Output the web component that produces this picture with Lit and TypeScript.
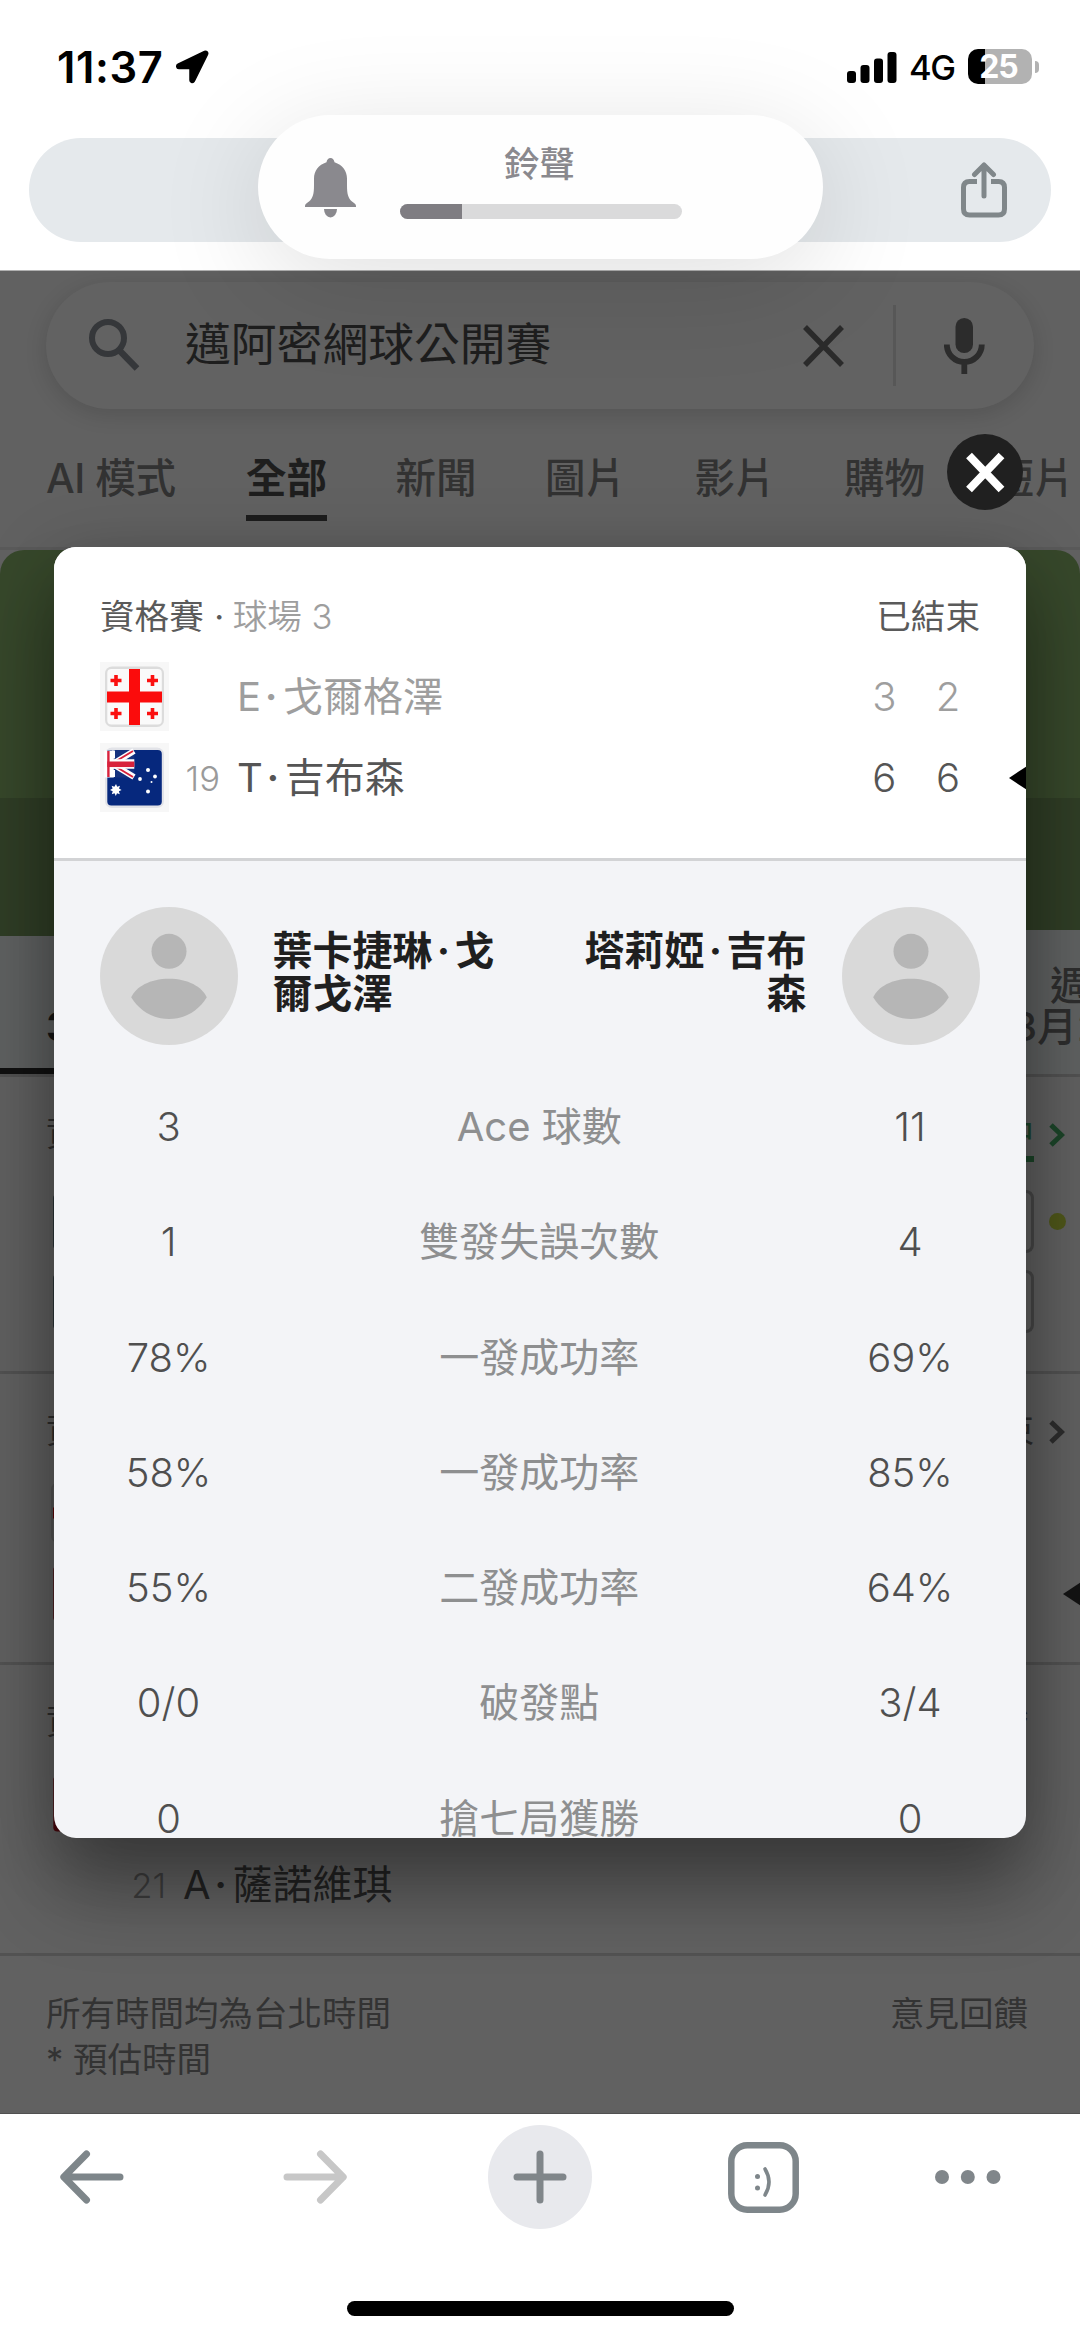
import { LitElement, html, svg, css, nothing } from "lit";
import { customElement, property } from "lit/decorators.js";
import { classMap } from "lit/directives/class-map.js";

type Player = { flag: string; seed?: string; initial?: string; name?: string; scores?: string[]; winner?: boolean };

const miniCross = (x: number, y: number) =>
  svg`<path d="M${x - 5.5} ${y}h11M${x} ${y - 5.5}v11" stroke="#fb1010" stroke-width="3.6"/>`;

const flags: Record<string, unknown> = {
  georgia: svg`
    <rect x="5" y="4.500" width="59" height="60.500" rx="7" fill="#dcdcdc"/>
    <rect x="7.300" y="7" width="54.500" height="55.500" rx="4" fill="#fafafa"/>
    <path d="M7 35h55M34.500 7v56" stroke="#fb0c0c" stroke-width="11"/>
    ${miniCross(16, 18.5)}${miniCross(52.5, 18.5)}${miniCross(16, 51.5)}${miniCross(52.5, 51.5)}`,
  australia: svg`
    <rect x="5" y="4.500" width="59" height="60.500" rx="7" fill="#e2e3e8"/>
    <rect x="7.300" y="7" width="54.500" height="55.500" rx="4" fill="#06287d"/>
    <rect x="7.300" y="7" width="27" height="27.500" fill="#15327f"/>
    <path d="M11 22L34 8M11 20L34 34" stroke="#fff" stroke-width="6"/>
    <path d="M13 20L33 8M13 22L33 34" stroke="#d8223c" stroke-width="2"/>
    <path d="M7.300 21h27M9 7.500v27" stroke="#fff" stroke-width="9.500"/>
    <path d="M7.300 21.300h27" stroke="#d8223c" stroke-width="5.500"/>
    <path d="M8.400 8v26" stroke="#d8223c" stroke-width="2.400"/>
    <path d="M12 7.500h3v8h-3zM12 27h3v7h-3z" fill="#fff"/>
    <path d="M16 41l1.200 2.700 2.800-.9-1 2.800 2.600 1.400-2.700 1.300.9 2.900-2.800-1-1.200 2.700-1.200-2.700-2.800 1 .9-2.900-2.700-1.300 2.600-1.400-1-2.800 2.800.9z" fill="#fff"/>
    <g fill="#fff"><circle cx="48" cy="27" r="2"/><circle cx="40" cy="36" r="1.900"/><circle cx="55" cy="33.500" r="1.900"/><circle cx="48" cy="48.500" r="2"/><circle cx="51.500" cy="39" r="1"/></g>`,
  red: svg`<rect x="7.300" y="7" width="54.500" height="55.500" rx="4" fill="#c01020"/>`,
  navy: svg`<rect x="7.300" y="7" width="54.500" height="55.500" rx="4" fill="#3a5a66"/>`,
};

@customElement("tennis-match")
export class TennisMatch extends LitElement {
  @property({ type: Boolean, reflect: true }) dim = false;
  @property({ type: Boolean, reflect: true }) live = false;
  @property() court = "";
  @property() status = "";
  @property({ type: Boolean }) chevron = false;
  @property({ attribute: false }) players: Player[] = [];

  static styles = css`
    :host { display: block; padding: 49px 46px 40px; color: #555; font-size: 40px; box-sizing: border-box; }
    :host([dim]) { padding: 36px 46px 28px; height: 291px; border-top: 3px solid #525252; color: #222; }
    :host([live]) { height: 297px; }
    .head { display: flex; justify-content: space-between; height: 40px; line-height: 40px; font-size: 34.600px; margin-bottom: 20.500px; color: #5a5a5a; }
    :host([dim]) .head { color: #2d2d2d; margin-bottom: 22.500px; }
    :host([dim][live]) .head { margin-bottom: 28px; }
    .court { color: #9e9e9e; margin-left: -2px; font-weight: 350; }
    .sep { display: inline-block; width: 27px; text-align: center; margin: 0 2px; }
    .status { display: flex; }
    .label { position: relative; }
    .label.estimate { margin-right: 5px; }
    :host([live]) .status { color: #1c4529; }
    .live-line { position: absolute; left: 0; right: 0; top: 43px; height: 6px; background: #1c4529; }
    .chev { width: 16px; height: 24px; margin: 10px -31px 0 15px; }
    .row { display: flex; align-items: center; height: 80.600px; line-height: 60px; position: relative; white-space: nowrap; }
    .flag { width: 69px; height: 69px; background: #f7f7f7; }
    :host([dim]) .flag { background: none; filter: brightness(.38); }
    .seed { width: 51px; text-align: right; font-size: 34.600px; color: #9a9a9a; padding-top: 2px; font-weight: 350; }
    :host([dim]) .seed { color: #3d3d3d; }
    .name { flex: 1; margin-left: 17px; padding-top: 1px; }
    .dot { display: inline-block; width: 22px; padding-right: 2px; box-sizing: border-box; text-align: center; font-weight: 600; }
    .score { width: 63.800px; text-align: center; font-weight: 350; padding-top: 1px; }
    .loser { color: #9e9e9e; }
    .box { width: 64px; height: 63px; border: 3px solid #484848; border-radius: 8px; box-sizing: border-box; }
    .arrow { position: absolute; right: -50px; top: 27.500px; width: 22px; height: 26px; }
    :host([dim]) .arrow { fill: #141414; }
    .ball { position: absolute; right: -32px; top: 31.500px; width: 17.500px; height: 17.500px; border-radius: 50%; background: #4f571a; }
  `;

  render() {
    return html`
      <div class="head">
        <div>資格賽${this.court ? html`<span class="sep">·</span><span class="court">${this.court}</span>` : nothing}</div>
        <div class="status">
          <span class=${classMap({ label: true, estimate: this.status.endsWith("*") })}>${this.status}${this.live ? html`<i class="live-line"></i>` : nothing}</span>
          ${this.chevron
            ? html`<svg class="chev" viewBox="0 0 16 24"><path d="M2 2l10.500 10L2 22" fill="none" stroke="currentColor" stroke-width="5"/></svg>`
            : nothing}
        </div>
      </div>
      ${this.players.map((p, i) => html`
        <div class=${classMap({ row: true, loser: !p.winner && !this.dim })}>
          <svg class="flag" viewBox="0 0 69 69">${flags[p.flag] ?? nothing}</svg>
          <span class="seed">${p.seed ?? ""}</span>
          <span class="name">${p.name ? html`${p.initial}<span class="dot">·</span>${p.name}` : nothing}</span>
          ${this.live ? html`<span class="box"></span>` : (p.scores ?? []).map((s) => html`<span class="score">${s}</span>`)}
          ${p.winner ? html`<svg class="arrow" viewBox="0 0 22 26"><path d="M1 13L22 -1V27z"/></svg>` : nothing}
          ${this.live && i === 0 ? html`<i class="ball"></i>` : nothing}
        </div>`)}
    `;
  }
}

const stats: [string, string, string][] = [
  ["3", "Ace 球數", "11"],
  ["1", "雙發失誤次數", "4"],
  ["78%", "一發成功率", "69%"],
  ["58%", "一發成功率", "85%"],
  ["55%", "二發成功率", "64%"],
  ["0/0", "破發點", "3/4"],
  ["0", "搶七局獲勝", "0"],
];

const finished: Player[] = [
  { flag: "georgia", initial: "E", name: "戈爾格澤", scores: ["3", "2"] },
  { flag: "australia", seed: "19", initial: "T", name: "吉布森", scores: ["6", "6"], winner: true },
];

const avatar = html`<svg class="avatar" viewBox="0 0 138 138">
  <circle cx="69" cy="69" r="69" fill="#d9d9d9"/>
  <circle cx="69" cy="44.300" r="17.500" fill="#b6b6b6"/>
  <path d="M69 71.700c19 0 33 8 37.800 18.600C99 103 86 112 69 112s-30-9-37.800-21.700C36 79.700 50 71.700 69 71.700z" fill="#b6b6b6"/>
</svg>`;

@customElement("app-root")
export class AppRoot extends LitElement {
  static styles = css`
    :host { display: flex; flex-direction: column; position: relative; width: 1080px; height: 2339px; overflow: hidden; background: #fff; font-family: Inter, "Noto Sans CJK TC", sans-serif; }
    * { box-sizing: border-box; }
    svg { display: block; flex: none; }

    .status { display: flex; align-items: center; height: 133px; padding: 0 41px 0 57px; color: #000; }
    .time { font-size: 43.500px; font-weight: 600; letter-spacing: .6px; width: 118px; white-space: nowrap; }
    .icons { display: flex; align-items: center; margin-left: auto; }
    .net { font-size: 34.500px; font-weight: 500; margin: 1px 13px 0 12px; width: 46px; letter-spacing: -1.400px; }
    .battery { width: 64px; height: 35px; border-radius: 10px; background: linear-gradient(90deg, #000 26%, #b2b2b2 26%); color: #fff; font-size: 32px; font-weight: 700; line-height: 36px; text-align: center; letter-spacing: -1px; padding-right: 3px; }
    .nub { width: 4px; height: 12px; margin-left: 3px; border-radius: 0 4px 4px 0; background: #b2b2b2; }

    .address { display: flex; align-items: center; justify-content: flex-end; flex: none; height: 104px; margin: 5px 29px 28px; padding-right: 44px; border-radius: 52px; background: #e5e9ec; }

    .page { position: relative; flex: none; height: 1844px; background: #616161; overflow: hidden; border-top: 1px solid #b0b0b0; border-bottom: 1px solid #505050; }
    .search { display: flex; align-items: center; height: 127px; margin: 11px 46px 0; border-radius: 64px; background: #626262; box-shadow: 0 5px 22px rgba(0, 0, 0, .14); padding-left: 42px; }
    .query { font-size: 45.800px; color: #1e1e1e; margin-left: 45px; width: 618px; line-height: 60px; margin-top: -1px; }
    .vline { width: 3px; height: 81px; background: #575757; margin: 0 48px 0 49px; }
    .tabs { display: flex; gap: 68.500px; height: 141px; padding: 50px 0 0 46px; border-bottom: 3px solid #5a5a5a; color: #323232; font-size: 40.500px; line-height: 40px; white-space: nowrap; }
    .tab { flex: none; height: 62px; font-weight: 450; }
    .tab.on { color: #1e1e1e; border-bottom: 6px solid #1c1c1c; font-weight: 700; }
    .tab:first-child { letter-spacing: -.4px; margin-right: 2px; }
    .hero { height: 380px; border-radius: 24px 24px 0 0; background: linear-gradient(#37482b 0 248px, #303e26 248px); }
    .dates { display: flex; height: 144px; font-size: 40px; color: #2e2e2e; line-height: 41px; white-space: nowrap; overflow: hidden; background: #303e26; }
    .date { flex: none; padding-top: 35px; background: #606262; }
    .date.on { margin-top: 6px; padding: 29px 0 0 46px; width: 540px; font-weight: 700; color: #161616; border-bottom: 6px solid #111; }
    .date.next { margin-left: auto; width: 472px; padding-left: 404px; font-weight: 450; }
    .date .day { display: block; padding-left: 38px; }
    .footer { display: flex; justify-content: space-between; border-top: 3px solid #525252; height: 164px; padding: 34.500px 52px 0 46px; font-size: 34.500px; line-height: 46px; color: #333; }

    .modal { position: absolute; left: 54px; top: 276px; width: 972px; height: 1291px; border-radius: 22px; background: #f3f4f7; box-shadow: 0 14px 72px rgba(0, 0, 0, .22), 0 55px 78px rgba(0, 0, 0, .3); overflow: hidden; }
    .modal tennis-match { background: #fff; border-bottom: 3px solid #d2d3d5; height: 314px; }
    .faces { display: flex; justify-content: space-between; margin: 46px 46px 0; }
    .avatar { width: 138px; height: 138px; }
    .who { font-size: 40px; font-weight: 700; line-height: 43px; color: #1f1f1f; white-space: nowrap; }
    .dot { display: inline-block; width: 22px; text-align: center; }
    .left { margin: 22px auto 0 34.500px; }
    .right { margin: 22px 35.500px 0 auto; text-align: right; }
    .stats { margin-top: 24px; padding-right: 1.500px; }
    .stat { display: grid; grid-template-columns: 229px 1fr 229px; height: 115.300px; line-height: 115px; text-align: center; font-size: 40px; color: #4f4f4f; font-weight: 350; }
    .stat .label { color: #8e8f90; font-weight: 400; }
    .close { position: absolute; left: 947px; top: 163px; width: 76px; height: 76px; }

    .toolbar { display: flex; align-items: center; height: 126px; padding: 0 79px 0 60px; }
    .plus { display: flex; align-items: center; justify-content: center; width: 104px; height: 104px; border-radius: 50%; background: #e8e9ed; margin: 0 136px 0 141px; }
    .fwd { margin-left: 159px; }
    .more { margin-left: auto; }
    .home { width: 387px; height: 15px; border-radius: 8px; background: #000; margin: 61px auto 0; }

    .hud { position: absolute; left: 258px; top: 115px; width: 565px; height: 144px; border-radius: 72px; background: #fefefe; box-shadow: 0 20px 110px rgba(0, 0, 0, .13); display: flex; padding-left: 47px; }
    .bell { margin-top: 43px; }
    .volume { width: 282px; margin: 30px 0 0 44px; text-align: center; font-size: 35.500px; line-height: 40px; font-weight: 500; color: #8a898e; text-indent: -3px; }
    .track { height: 15px; border-radius: 8px; background: #dadadb; margin-top: 19px; overflow: hidden; }
    .fill { height: 15px; background: #7f7d82; }
  `;

  render() {
    return html`
      <div class="status">
        <span class="time">11:37</span>
        <svg width="34" height="34" viewBox="0 0 34 34"><path d="M29.500 1.500L3 14.300c-2 1-1.500 4.300 .8 4.300H15v11.600c0 2.800 3.400 3 4.400.8L32.500 4.300c.8-2-1-3.700-3-2.800z" stroke="#000" stroke-width="1.500" stroke-linejoin="round"/></svg>
        <div class="icons">
          <svg width="50" height="32" viewBox="0 0 50 32"><rect y="20" width="9" height="12" rx="3"/><rect x="13.500" y="14" width="9" height="18" rx="3"/><rect x="27" y="7.500" width="9" height="24.500" rx="3"/><rect x="40.500" y="1" width="9" height="31" rx="3"/></svg>
          <span class="net">4G</span>
          <span class="battery">25</span><i class="nub"></i>
        </div>
      </div>
      <div class="address">
        <svg width="46" height="56" viewBox="0 0 46 56" fill="none" stroke="#80878a" stroke-width="5"><path d="M16 19.500H8.500q-6 0-6 6V47q0 6 6 6h29q6 0 6-6V25.500q0-6-6-6H30"/><path d="M23 34V3M13.500 12.500L23 3l9.500 9.500" stroke-linecap="round" stroke-linejoin="round"/></svg>
      </div>

      <div class="page">
        <div class="search">
          <svg width="52" height="53" viewBox="0 0 52 53" fill="none" stroke="#35373a"><circle cx="20" cy="19" r="16" stroke-width="6"/><path d="M31.500 31.500L49 49.500" stroke-width="6.500"/></svg>
          <span class="query">邁阿密網球公開賽</span>
          <svg width="41" height="42" viewBox="0 0 41 42"><path d="M2 2l37 38M39 2L2 40" stroke="#2b2b2b" stroke-width="5.500"/></svg>
          <i class="vline"></i>
          <svg width="41" height="56" viewBox="0 0 41 56"><rect x="11.500" y="0" width="17.500" height="35" rx="8.700" fill="#2c2c2c"/><path d="M2.800 26.500a17.500 17.500 0 0 0 35 0M20.300 44v12" fill="none" stroke="#2c2c2c" stroke-width="5.800"/></svg>
        </div>
        <div class="tabs">
          ${["AI 模式", "全部", "新聞", "圖片", "影片", "購物", "短片"].map(
            (t) => html`<span class=${classMap({ tab: true, on: t === "全部" })}>${t}</span>`,
          )}
        </div>
        <div class="hero"></div>
        <div class="dates">
          <div class="date on"><span class="day">今天</span>3月22日</div>
          <div class="date next"><span class="day">週一</span>3月23日</div>
        </div>
        <tennis-match dim live chevron status="進行中" .players=${[{ flag: "navy" }, { flag: "navy" }]}></tennis-match>
        <tennis-match dim chevron status="已結束" .players=${[{ flag: "georgia" }, { flag: "red", winner: true }]}></tennis-match>
        <tennis-match dim status="23:00*" .players=${[{ flag: "red" }, { flag: "none", seed: "21", initial: "A", name: "薩諾維琪" }]}></tennis-match>
        <div class="footer"><div>所有時間均為台北時間<br />* 預估時間</div><div>意見回饋</div></div>

        <div class="modal">
          <tennis-match court="球場 3" status="已結束" .players=${finished}></tennis-match>
          <div class="faces">
            ${avatar}
            <div class="who left">葉卡捷琳<span class="dot">·</span>戈<br />爾戈澤</div>
            <div class="who right">塔莉婭<span class="dot">·</span>吉布<br />森</div>
            ${avatar}
          </div>
          <div class="stats">
            ${stats.map(([a, label, b]) => html`<div class="stat"><span>${a}</span><span class="label">${label}</span><span>${b}</span></div>`)}
          </div>
        </div>
        <svg class="close" viewBox="0 0 76 76"><circle cx="38" cy="38" r="38" fill="#202020"/><path d="M22 21.500l32.500 34M54.500 21.500L22 55.500" stroke="#fff" stroke-width="8"/></svg>
      </div>

      <div class="toolbar">
        <svg width="64" height="54" viewBox="0 0 64 54" fill="none" stroke="#7e868a" stroke-width="7" stroke-linecap="round" stroke-linejoin="round"><path d="M60 27H4M26.500 4L3.800 27l22.700 23"/></svg>
        <svg class="fwd" width="64" height="54" viewBox="0 0 64 54" fill="none" stroke="#c7c7c7" stroke-width="7" stroke-linecap="round" stroke-linejoin="round"><path d="M4 27h56M37.500 4l22.700 23-22.700 23"/></svg>
        <div class="plus"><svg width="54" height="54" viewBox="0 0 54 54" stroke="#80868a" stroke-width="7" stroke-linecap="round"><path d="M27 4v46M4 27h46"/></svg></div>
        <svg width="71" height="71" viewBox="0 0 71 71" fill="none" stroke="#7e868a"><rect x="3.300" y="3.300" width="64.400" height="64.400" rx="16" stroke-width="6.500"/><circle cx="29.500" cy="34.500" r="2.500" fill="#7e868a" stroke="none"/><circle cx="29.500" cy="46" r="2.500" fill="#7e868a" stroke="none"/><path d="M37 27q8 13 0 26" stroke-width="3.600" stroke-linecap="round"/></svg>
        <svg class="more" width="66" height="14" viewBox="0 0 66 14" fill="#80868a"><circle cx="7" cy="7" r="7"/><circle cx="32.800" cy="7" r="7"/><circle cx="58.500" cy="7" r="7"/></svg>
      </div>
      <div class="home"></div>

      <div class="hud">
        <svg class="bell" width="51" height="60" viewBox="0 0 51 60" fill="#8a898e"><path d="M25.500 0c2.200 0 3.600 1.800 4 4.300C37.500 7 42 13 42 20.500V27c0 9 1 13 5 16.500 2.500 1.800 4 2.800 4 4.500v1H0v-1c0-1.700 1.500-2.700 4-4.500C8 40 9 36 9 27v-6.500C9 13 13.500 7 21.500 4.300c.4-2.500 1.800-4.300 4-4.300z"/><path d="M19 51h13a6.500 8.500 0 0 1-13 0z"/></svg>
        <div class="volume">鈴聲<div class="track"><div class="fill" style="width:22%"></div></div></div>
      </div>
    `;
  }
}
